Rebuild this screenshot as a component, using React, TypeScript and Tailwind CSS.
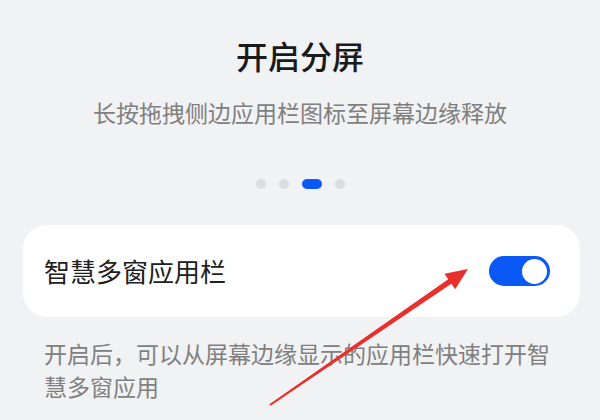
import React from 'react';

// ─── Page indicator ───────────────────────────────────────────────────────────

function PageDots({ active, count }: { active: number; count: number }) {
  return (
    <div className="flex items-center gap-[13px]">
      {Array.from({ length: count }).map((_, i) =>
        i === active ? (
          <span key={i} className="h-[10px] w-[20px] rounded-full bg-[#0a59f7]" />
        ) : (
          <span key={i} className="h-[10px] w-[10px] rounded-full bg-[#dcdde0]" />
        ),
      )}
    </div>
  );
}

// ─── Switch ───────────────────────────────────────────────────────────────────

function Toggle({ on }: { on: boolean }) {
  return (
    <div
      className={`flex h-[30px] w-[61px] items-center rounded-full px-[3px] ${
        on ? 'justify-end bg-[#0a59f7]' : 'justify-start bg-[#d5d6d8]'
      }`}
    >
      <span className="h-[25px] w-[25px] rounded-full bg-white" />
    </div>
  );
}

// ─── Annotation arrow (drawn over the screenshot) ─────────────────────────────

function RedArrow() {
  return (
    <svg className="pointer-events-none absolute inset-0" width="600" height="420" viewBox="0 0 600 420">
      <polygon
        points="269.4,404.2 448.2,279.2 444.5,273.8 468,269 455.2,289.2 451.4,283.8 270.6,405.8"
        fill="#e8302c"
      />
    </svg>
  );
}

export default function App() {
  return (
    <div className="relative h-[420px] w-[600px] overflow-hidden bg-[#f1f2f4] font-['Noto_Sans_CJK_SC','Noto_Sans',sans-serif]">
      <div className="flex flex-col items-center pt-[35px]">
        <h1 className="text-[32px] font-medium leading-[40px] text-[#1a1a1a]">开启分屏</h1>
        <p className="mt-[22px] text-[23px] leading-[30px] text-[#7f7f7f]">长按拖拽侧边应用栏图标至屏幕边缘释放</p>
        <div className="mt-[52px]">
          <PageDots active={2} count={4} />
        </div>
      </div>

      {/* Setting card */}
      <div className="ml-[23px] mr-[20px] mt-[36px] flex h-[92px] items-center justify-between rounded-[24px] bg-white pl-[21px] pr-[30px]">
        <span className="text-[26px] leading-[34px] text-[#202020]">智慧多窗应用栏</span>
        <Toggle on />
      </div>

      <p className="mt-[20px] pl-[44px] pr-[34px] text-[23px] leading-[33px] text-[#808080]">
        开启后，可以从屏幕边缘显示的应用栏快速打开智慧多窗应用
      </p>

      <RedArrow />
    </div>
  );
}
